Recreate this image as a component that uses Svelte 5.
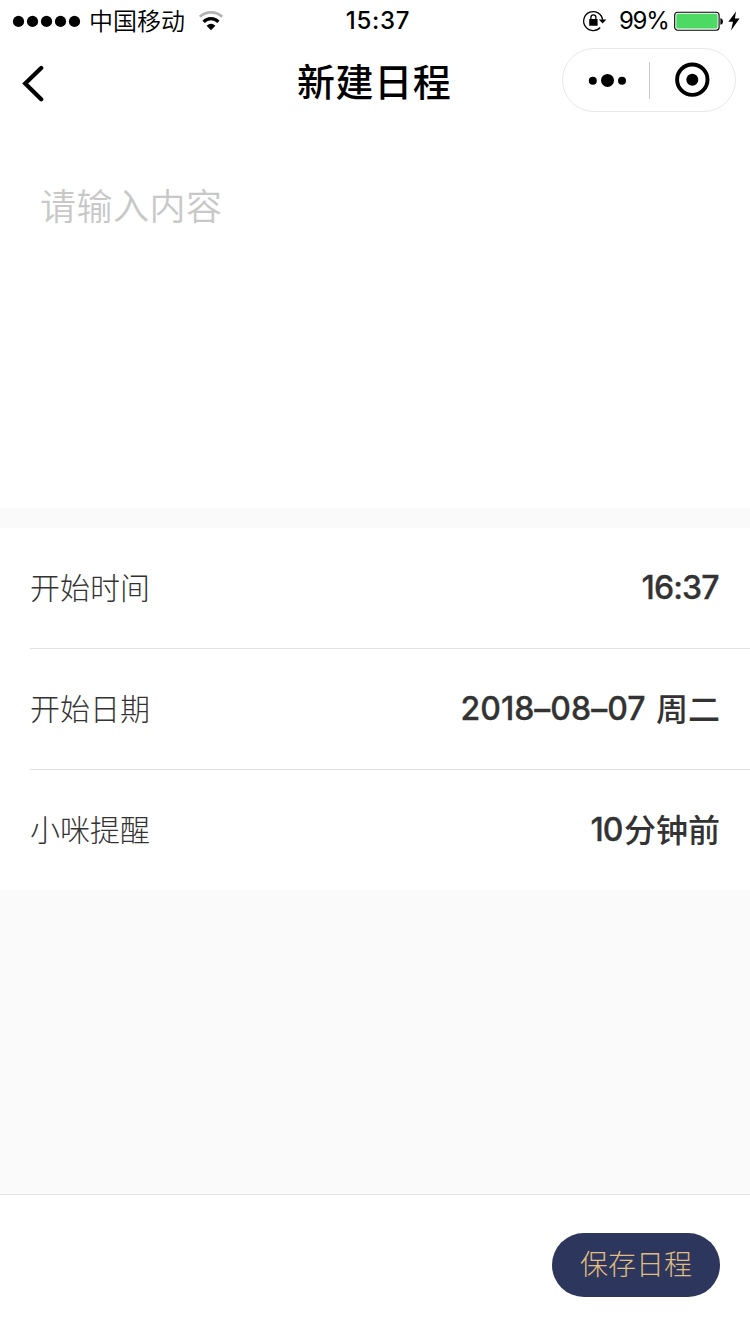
<script>
  const rows = [
    { label: '开始时间', num: '16:37', text: '', width: 78 },
    { label: '开始日期', num: '2018–08–07', text: '周二', width: 185 },
    { label: '小咪提醒', num: '10', text: '分钟前', width: 33 }
  ];
  let content = $state('');
</script>

<div class="page">
  <header>
    <div class="status">
      <div class="carrier">
        <svg class="signal" width="70" height="40" viewBox="0 0 70 40">
          {#each [0, 1, 2, 3, 4] as i}
            <circle cx={6.5 + i * 14} cy="20.4" r="5.6" />
          {/each}
        </svg>
        <span class="operator">中国移动</span>
        <svg class="wifi" width="26" height="40" viewBox="0 0 26 40">
          <path d="M1.8 15.8A16.4 16.4 0 0 1 24.2 15.8" fill="none" stroke="#b3b3b3" stroke-width="2.8" />
          <path d="M5.6 20.8A10.4 10.4 0 0 1 20.4 20.8" fill="none" stroke="#000" stroke-width="3.2" />
          <path d="M13 29.2L8.6 24.8Q13 20.8 17.4 24.8Z" />
        </svg>
      </div>
      <time>15:37</time>
      <div class="power">
        <svg width="26" height="40" viewBox="0 0 26 40">
          <path d="M18.2 26.5A9.5 9.5 0 1 1 20.6 18.8" fill="none" stroke="#000" stroke-width="1.3" />
          <path d="M16.8 18.4H24.4L20.6 22.6Z" />
          <rect x="7.2" y="18" width="8.4" height="6.8" rx=".5" />
          <path d="M8.9 19V16.4a2.5 2.5 0 0 1 5 0V19" fill="none" stroke="#000" stroke-width="1.3" />
        </svg>
        <span class="percent">99%</span>
        <svg class="battery" width="52" height="40" viewBox="0 0 52 40">
          <rect x=".7" y="11.2" width="44.4" height="18" rx="3" fill="#fff" stroke="#000" stroke-width="1.1" />
          <rect x="2.3" y="12.8" width="41.2" height="14.8" rx="1.6" fill="#4cd964" />
          <path d="M46.4 17Q49 17.7 49 20.4T46.4 23.8Z" />
        </svg>
        <svg class="bolt" width="14" height="40" viewBox="0 0 14 40">
          <path d="M9 10.4L1.4 20.8H6L4 29.4L12.6 17.6H7.9Z" />
        </svg>
      </div>
    </div>
    <nav>
      <button class="back" aria-label="返回">
        <svg width="24" height="40" viewBox="0 0 24 40">
          <path d="M21.2 5L5.2 20.6L21.2 36.3" fill="none" stroke="#000" stroke-width="4.2" stroke-linecap="round" />
        </svg>
      </button>
      <h1>新建日程</h1>
      <div class="capsule">
        <button aria-label="更多">
          <svg width="87" height="62" viewBox="0 0 87 62">
            <circle cx="29.8" cy="31.8" r="4" />
            <circle cx="44.5" cy="31.4" r="6.5" />
            <circle cx="59" cy="31.8" r="4" />
          </svg>
        </button>
        <i></i>
        <button aria-label="关闭">
          <svg width="84" height="62" viewBox="0 0 84 62">
            <circle cx="42.3" cy="30.7" r="15.2" fill="none" stroke="#000" stroke-width="3.9" />
            <circle cx="42.3" cy="30.7" r="6" />
          </svg>
        </button>
      </div>
    </nav>
  </header>

  <textarea placeholder="请输入内容" bind:value={content}></textarea>

  <section>
    {#each rows as row}
      <div class="row">
        <span class="label">{row.label}</span>
        <span class="value">
          <svg class="num" style:width="{row.width}px" height="48">
            <text x="-0.5" y="37" textLength={row.width}>{row.num}</text>
          </svg>
          {#if row.text}<span class:spaced={row.text === '周二'}>{row.text}</span>{/if}
        </span>
      </div>
    {/each}
  </section>

  <footer>
    <button class="save">保存日程</button>
  </footer>
</div>

<style>
  :global(body) { background: #fafafa; }
  .page {
    width: 750px;
    height: 1334px;
    display: flex;
    flex-direction: column;
    background: #fafafa;
    color: #000;
    font-family: "Noto Sans CJK SC", sans-serif;
    overflow: hidden;
  }
  svg { display: block; flex: none; }
  button { border: 0; padding: 0; background: none; font: inherit; }
  header { background: #fff; height: 128px; flex: none; }
  .status {
    height: 40px;
    display: grid;
    grid-template-columns: 322px 88px 1fr;
    padding: 0 9px 0 12px;
    line-height: 40px;
  }
  .carrier, .power { display: flex; align-items: center; }
  .operator { font-size: 24px; font-weight: 350; line-height: 38px; height: 40px; margin-left: 7px; width: 98px; white-space: nowrap; }
  .wifi { margin-left: 11px; }
  time { font: 500 24px/42px Inter, sans-serif; letter-spacing: 0.7px; text-align: center; }
  .power { justify-content: flex-end; }
  .percent { font: 400 24px/42px Inter, sans-serif; width: 50px; margin: 0 5px 0 11px; letter-spacing: -1.3px; white-space: nowrap; }
  .bolt { margin-left: 1px; }
  nav {
    height: 88px;
    display: grid;
    grid-template-columns: 188px 1fr 174px;
    padding: 0 14px 0 20px;
    align-items: start;
  }
  .back { width: 24px; margin-top: 23px; }
  h1 {
    margin: 0;
    padding-left: 89px;
    font-size: 38px;
    font-weight: 500;
    line-height: 80px;
    letter-spacing: 0.6px;
    white-space: nowrap;
  }
  .capsule {
    margin-top: 8px;
    height: 64px;
    box-sizing: border-box;
    border: 1px solid #e8e8e8;
    border-radius: 32px;
    display: flex;
    align-items: center;
  }
  .capsule i { width: 1px; height: 37px; background: #c8c8c8; }
  .capsule button:first-child { margin-right: -1px; }
  textarea {
    height: 380px;
    flex: none;
    box-sizing: border-box;
    display: block;
    border: 0;
    outline: 0;
    resize: none;
    background: #fff;
    padding: 49px 40px;
    font: 350 36px/54px "Noto Sans CJK SC", sans-serif;
    letter-spacing: 0.5px;
    color: #333;
  }
  textarea::placeholder { color: #c8c8c8; opacity: 1; }
  section { margin-top: 20px; background: #fff; padding-left: 30px; }
  .row {
    height: 120px;
    box-sizing: border-box;
    padding: 0 30px 4px 0;
    display: flex;
    align-items: center;
    justify-content: space-between;
    color: #333;
  }
  .row + .row { height: 121px; border-top: 1px solid #e2e2e2; }
  .label { font-size: 30px; font-weight: 300; line-height: 48px; }
  .value { display: flex; align-items: center; font-size: 32px; font-weight: 500; line-height: 48px; }
  .num { font: 500 32px Inter, sans-serif; font-feature-settings: "calt" 0; fill: #333; stroke: #333; stroke-width: 0.3px; overflow: visible; }
  .spaced { margin-left: 10px; }
  footer {
    margin-top: auto;
    height: 140px;
    box-sizing: border-box;
    border-top: 1px solid #e2e2e2;
    background: #fff;
    padding: 38px 30px 0;
    display: flex;
    justify-content: flex-end;
  }
  .save {
    width: 168px;
    height: 64px;
    box-sizing: border-box;
    padding-bottom: 4px;
    border-radius: 32px;
    background: #2d365c;
    color: #e0bd83;
    font-size: 28px;
    font-weight: 300;
    line-height: 60px;
  }
</style>
